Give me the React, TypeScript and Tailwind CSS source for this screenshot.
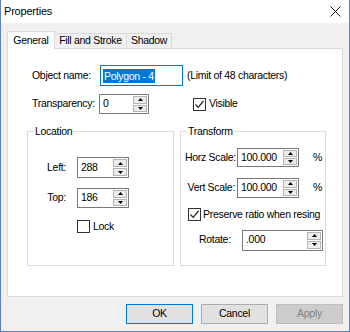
import React from "react";

const font = { fontFamily: '"Liberation Sans", Arial, sans-serif' };

function Arrow({ up }: { up?: boolean }) {
  return (
    <svg width="5" height="3" viewBox="0 0 5 3">
      {up ? <path d="M0 3 L2.5 0 L5 3 Z" fill="#000" /> : <path d="M0 0 L2.5 3 L5 0 Z" fill="#000" />}
    </svg>
  );
}

function Spin({ value, className }: { value: string; className: string }) {
  return (
    <div className={`flex border border-[#7a7a7a] bg-white ${className}`}>
      <div className="flex flex-1 items-center pl-[3px]">{value}</div>
      <div className="flex w-[15px] flex-col gap-[1px] py-[1px] pr-[1px]">
        <div className="flex flex-1 items-center justify-center border border-[#b4b4b4] bg-[#ececec]">
          <Arrow up />
        </div>
        <div className="flex flex-1 items-center justify-center border border-[#b4b4b4] bg-[#ececec]">
          <Arrow />
        </div>
      </div>
    </div>
  );
}

function Check({ checked }: { checked?: boolean }) {
  return (
    <div className="flex h-[13px] w-[13px] items-center justify-center border border-[#333] bg-white">
      {checked && (
        <svg width="11" height="11" viewBox="0 0 11 11">
          <path d="M1.5 5.5 L4.2 8.3 L9.5 2" fill="none" stroke="#222" strokeWidth="1.2" />
        </svg>
      )}
    </div>
  );
}

export default function App() {
  return (
    <div
      style={font}
      className="flex h-[332px] w-[350px] flex-col border-x border-b border-[#5b7fc9] bg-[#f0f0f0] text-[10.5px] tracking-[-0.3px] text-black"
    >
      {/* title bar */}
      <div className="flex h-[23px] items-center justify-between bg-white pl-[3px] pr-[8px]">
        <span className="text-[11px] tracking-[-0.2px]">Properties</span>
        <svg width="11" height="11" viewBox="0 0 11 11">
          <path d="M0.5 0.5 L10.5 10.5 M10.5 0.5 L0.5 10.5" stroke="#111" strokeWidth="1" />
        </svg>
      </div>

      <div className="flex flex-1 flex-col px-[6px] pt-[8px]">
        {/* tabs */}
        <div className="relative z-10 -mb-[1px] flex h-[18px] items-end">
          <div className="flex h-[18px] w-[48px] items-start justify-center border-x border-t border-[#d9d9d9] bg-white pt-[1px]">
            General
          </div>
          <div className="mb-[1px] flex h-[15px] w-[72px] items-center justify-center border-r border-t border-[#d9d9d9] bg-[#f0f0f0]">
            Fill and Stroke
          </div>
          <div className="mb-[1px] flex h-[15px] w-[45px] items-center justify-center border-r border-t border-[#d9d9d9] bg-[#f0f0f0]">
            Shadow
          </div>
        </div>

        {/* panel */}
        <div className="flex h-[249px] flex-col border border-[#d9d9d9] bg-white">
          <div className="ml-[24px] mt-[16px] flex items-center">
            <span className="w-[68px]">Object name:</span>
            <div className="flex h-[21px] w-[83px] items-center border border-[#0078d7] pl-[2px]">
              <span className="bg-[#0078d7] px-[1px] leading-[14px] text-white">Polygon - 4</span>
            </div>
            <span className="ml-[4px]">(Limit of 48 characters)</span>
          </div>

          <div className="ml-[24px] mt-[8px] flex items-center">
            <span className="w-[67px]">Transparency:</span>
            <Spin value="0" className="h-[20px] w-[50px]" />
            <div className="ml-[44px] flex items-center gap-[3px]">
              <Check checked />
              <span>Visible</span>
            </div>
          </div>

          <div className="ml-[19px] mt-[11px] flex gap-[6px]">
            <fieldset className="h-[141px] w-[147px] border border-[#dcdcdc]">
              <legend className="ml-[6px] px-[1px] leading-[12px]">Location</legend>
              <div className="mt-[20px] flex items-center">
                <span className="w-[38px] text-right">Left:</span>
                <Spin value="288" className="ml-[11px] h-[21px] w-[52px]" />
              </div>
              <div className="mt-[10px] flex items-center">
                <span className="w-[38px] text-right">Top:</span>
                <Spin value="186" className="ml-[11px] h-[20px] w-[52px]" />
              </div>
              <div className="ml-[49px] mt-[11px] flex items-center gap-[3px]">
                <Check />
                <span>Lock</span>
              </div>
            </fieldset>

            <fieldset className="h-[141px] w-[146px] border border-[#dcdcdc]">
              <legend className="ml-[6px] px-[1px] leading-[12px]">Transform</legend>
              <div className="mt-[11px] flex items-center">
                <span className="w-[55px] text-right">Horz Scale:</span>
                <Spin value="100.000" className="ml-[1px] h-[19px] w-[62px]" />
                <span className="ml-[14px]">%</span>
              </div>
              <div className="mt-[11px] flex items-center">
                <span className="w-[54px] text-right">Vert Scale:</span>
                <Spin value="100.000" className="ml-[2px] h-[20px] w-[62px]" />
                <span className="ml-[14px]">%</span>
              </div>
              <div className="ml-[7px] mt-[9px] flex items-center gap-[2px]">
                <Check checked />
                <span>Preserve ratio when resing</span>
              </div>
              <div className="ml-[18px] mt-[7px] flex items-center">
                <span className="w-[32px]">Rotate:</span>
                <Spin value=".000" className="ml-[11px] h-[21px] w-[81px]" />
              </div>
            </fieldset>
          </div>
        </div>

        {/* buttons */}
        <div className="mt-[7px] flex justify-end gap-[8px]">
          <div className="flex h-[20px] w-[67px] items-center justify-center border border-[#0078d7] bg-[#e1e1e1]">
            OK
          </div>
          <div className="flex h-[20px] w-[67px] items-center justify-center border border-[#adadad] bg-[#e1e1e1]">
            Cancel
          </div>
          <div className="flex h-[20px] w-[67px] items-center justify-center border border-[#bfbfbf] bg-[#cccccc] text-[#838383]">
            Apply
          </div>
        </div>
      </div>
    </div>
  );
}
